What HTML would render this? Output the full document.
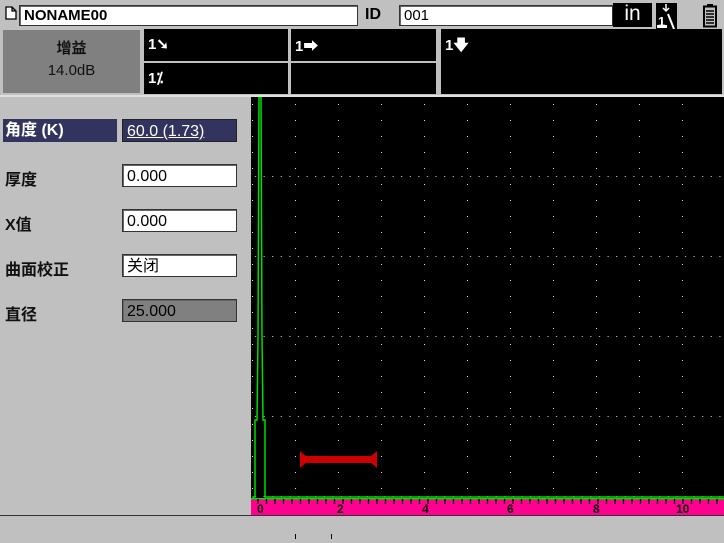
<!DOCTYPE html><html><head><style>
body{margin:0;width:724px;height:543px;background:#c0c0c0;position:relative;overflow:hidden;font-family:"Liberation Sans","Noto Sans CJK SC",sans-serif;}
.a{position:absolute;box-sizing:border-box}
.in{background:#fff;border:1px solid #333;box-shadow:inset 1px 1px 0 #666;font-size:15px;line-height:20px;padding-left:4px;color:#000}
.in16{font-size:16px;line-height:23px}
.blk{background:#000;color:#fff;font-size:15px;font-weight:bold}
.lab{font-size:16px;font-weight:bold;color:#111}
</style></head><body>
<svg class="a" style="left:5px;top:6px" width="12" height="14"><path d="M1 1H7L11 5V13H1Z M7 1V5H11" fill="#fff" stroke="#000" stroke-width="1.3"/></svg>
<div class="a in" style="left:19px;top:5px;width:339px;height:21px;font-weight:bold">NONAME00</div>
<div class="a" style="left:365px;top:6px;font-size:16px;font-weight:bold">ID</div>
<div class="a in" style="left:399px;top:5px;width:214px;height:21px">001</div>
<div class="a" style="left:613px;top:3px;width:39px;height:24px;background:#000;color:#fff;font-size:21px;line-height:22px;text-align:center">in</div>
<div class="a" style="left:656px;top:3px;width:21px;height:26px;background:#000"></div>
<svg class="a" style="left:656px;top:3px" width="22" height="26"><path d="M10 1V8M7 5L10 8L13 5" stroke="#fff" stroke-width="1.5" fill="none"/><text x="2" y="23" fill="#fff" font-size="13" font-weight="bold" font-family="Liberation Sans">1</text><path d="M12 11L18 26" stroke="#fff" stroke-width="2"/><rect x="1" y="22" width="10" height="3" fill="#fff"/></svg>
<svg class="a" style="left:703px;top:4px" width="14" height="24"><rect x="4" y="0" width="6" height="3" fill="#000"/><rect x="1" y="2.5" width="12" height="20" fill="none" stroke="#000" stroke-width="2"/><path d="M3 7H11M3 10H11M3 13H11M3 16H11M3 19H11" stroke="#000" stroke-width="1.5"/></svg>
<div class="a" style="left:3px;top:30px;width:137px;height:63px;background:#808080;text-align:center;font-size:15px;line-height:22px;padding-top:8px;color:#111"><b>增益</b><br>14.0dB</div>
<div class="a blk" style="left:144px;top:29px;width:144px;height:32px;padding:6px 4px">1➘</div>
<div class="a blk" style="left:144px;top:63px;width:144px;height:31px;padding:6px 4px">1⁒</div>
<div class="a blk" style="left:291px;top:29px;width:145px;height:32px;padding:6px 4px">1➡</div>
<div class="a blk" style="left:291px;top:63px;width:145px;height:31px"></div>
<div class="a blk" style="left:441px;top:29px;width:281px;height:65px;padding:6px 4px">1🡇</div>
<div class="a" style="left:0;top:95px;width:724px;height:2px;background:#fff;opacity:.5"></div>
<div class="a" style="left:3px;top:119px;width:114px;height:23px;background:#33335f;color:#fff;font-size:16px;font-weight:bold;line-height:23px;padding-left:2px">角度 (K)</div>
<div class="a" style="left:122px;top:119px;width:115px;height:23px;background:#33335f;color:#fff;font-size:16px;line-height:23px;padding-left:4px;border:1px solid #222"><u>60.0 (1.73)</u></div>
<div class="a lab" style="left:5px;top:166px">厚度</div>
<div class="a in in16" style="left:122px;top:164px;width:115px;height:23px">0.000</div>
<div class="a lab" style="left:5px;top:211px">X值</div>
<div class="a in in16" style="left:122px;top:209px;width:115px;height:23px">0.000</div>
<div class="a lab" style="left:5px;top:256px">曲面校正</div>
<div class="a in in16" style="left:122px;top:254px;width:115px;height:23px">关闭</div>
<div class="a lab" style="left:5px;top:301px">直径</div>
<div class="a in in16" style="left:122px;top:299px;width:115px;height:23px;background:#808080">25.000</div>
<svg class="a" style="left:251px;top:97px" width="473" height="419">
<defs>
<pattern id="v" x="1" y="0" width="43" height="16" patternUnits="userSpaceOnUse"><rect x="43" y="7" width="1" height="1" fill="#ddd"/><rect x="0" y="7" width="1" height="1" fill="#ddd"/></pattern>
<pattern id="h" x="0" y="0" width="8.6" height="80" patternUnits="userSpaceOnUse"><rect x="4" y="79" width="1" height="1" fill="#ddd"/></pattern>
</defs>
<rect width="473" height="402" fill="#000"/>
<rect x="0" y="0" width="473" height="400" fill="url(#v)"/>
<rect x="0" y="0" width="473" height="400" fill="url(#h)"/>
<path d="M2 402V400H4V323H6L7 240L8 0H10L11 240L12 323H14V400H473" stroke="#0d0" stroke-width="1.5" fill="none"/>
<path d="M49 354L55 359H120L126 354V371L120 366H55L49 371Z" fill="#c00"/>
<rect x="0" y="402" width="473" height="17" fill="#ff0090"/>
<rect x="0" y="401" width="473" height="1.5" fill="#0d0"/>
<g stroke="#000" stroke-width="1.3">
<path d="M7 402v5M15.5 402v5M24 402v5M32.5 402v5M41 402v5M49.5 402v5M58 402v5M66.5 402v5M75 402v5M83.5 402v5M92 402v5M100.5 402v5M109 402v5M117.5 402v5M126 402v5M134.5 402v5M143 402v5M151.5 402v5M160 402v5M168.5 402v5M177 402v5M185.5 402v5M194 402v5M202.5 402v5M211 402v5M219.5 402v5M228 402v5M236.5 402v5M245 402v5M253.5 402v5M262 402v5M270.5 402v5M279 402v5M287.5 402v5M296 402v5M304.5 402v5M313 402v5M321.5 402v5M330 402v5M338.5 402v5M347 402v5M355.5 402v5M364 402v5M372.5 402v5M381 402v5M389.5 402v5M398 402v5M406.5 402v5M415 402v5M423.5 402v5M432 402v5M440.5 402v5M449 402v5M457.5 402v5M466 402v5"/>
</g>
<g font-size="12" font-weight="bold" font-family="Liberation Sans" fill="#000">
<text x="6" y="416">0</text><text x="86" y="416">2</text><text x="171" y="416">4</text><text x="256" y="416">6</text><text x="342" y="416">8</text><text x="425" y="416">10</text></g>
</svg>
<div class="a" style="left:0;top:515px;width:724px;height:1px;background:#333"></div>
<div class="a" style="left:295px;top:534px;width:1px;height:5px;background:#000"></div>
<div class="a" style="left:331px;top:534px;width:1px;height:5px;background:#000"></div>
</body></html>
